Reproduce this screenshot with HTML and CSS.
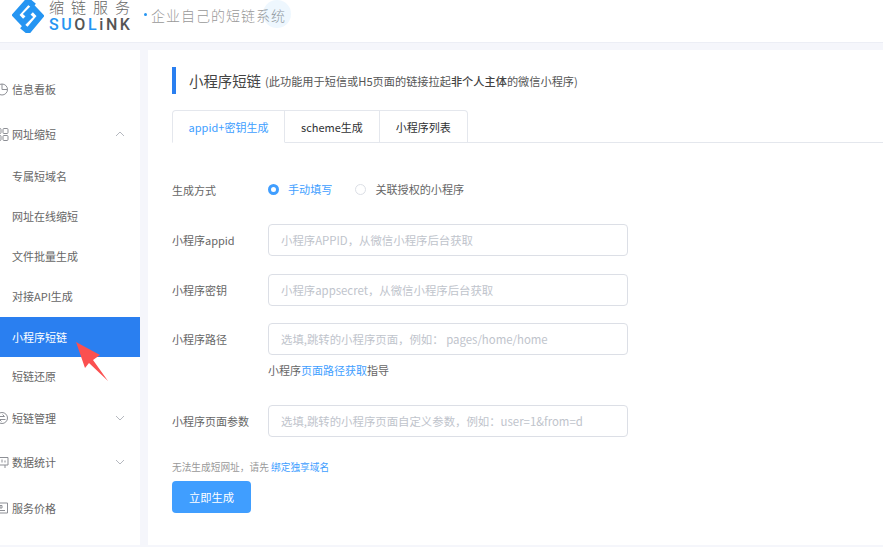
FILE: index.html
```html
<!DOCTYPE html>
<html>
  <head>
    <title>小程序短链</title>
    <link rel="stylesheet" href="styles.css">
  </head>
  <body>
    <header class="topbar">
      <svg class="logo-mark" viewBox="0 0 32 34" xmlns="http://www.w3.org/2000/svg">
        <path d="M22 7 L16 2 L3.500 16 L11 24 L19 16" />
        <path d="M10 27 L16 32 L28.500 17 L21 9 L13 17" />
      </svg>
      <div class="logo-text">
        <div class="logo-cn">缩链服务</div>
        <div class="logo-en"><span class="blue">SU</span>O<span class="blue">L</span>iNK</div>
      </div>
      <span class="slogan-dot"></span>
      <div class="slogan">企业自己的短链系统<span class="slogan-glow"></span></div>
    </header>

    <div class="page">
      <nav class="sidebar">
        <a class="menu-top first">
          <svg class="menu-icon" viewBox="0 0 14 14" xmlns="http://www.w3.org/2000/svg">
            <circle cx="7" cy="7.500" r="5.500" />
            <path d="M7 2v5.500h5.500" />
          </svg>
          信息看板
        </a>
        <a class="menu-top">
          <svg class="menu-icon" viewBox="0 0 14 14" xmlns="http://www.w3.org/2000/svg">
            <rect x="1" y="1.500" width="5" height="5" rx="1" />
            <rect x="8" y="1.500" width="5" height="5" rx="1" />
            <rect x="1" y="8.500" width="5" height="5" rx="1" />
            <rect x="8" y="8.500" width="5" height="5" rx="1" />
          </svg>
          网址缩短
          <svg class="caret" viewBox="0 0 10 6" xmlns="http://www.w3.org/2000/svg"><path d="M1 5l4-4 4 4" /></svg>
        </a>
        <a class="menu-sub">专属短域名</a>
        <a class="menu-sub">网址在线缩短</a>
        <a class="menu-sub">文件批量生成</a>
        <a class="menu-sub">对接API生成</a>
        <a class="menu-sub active">小程序短链</a>
        <a class="menu-sub">短链还原</a>
        <a class="menu-top">
          <svg class="menu-icon" viewBox="0 0 14 14" xmlns="http://www.w3.org/2000/svg">
            <circle cx="7" cy="7" r="5.500" />
            <path d="M3.500 5.500h6l-2-2M10.500 8.500h-6l2 2" />
          </svg>
          短链管理
          <svg class="caret" viewBox="0 0 10 6" xmlns="http://www.w3.org/2000/svg"><path d="M1 1l4 4 4-4" /></svg>
        </a>
        <a class="menu-top">
          <svg class="menu-icon" viewBox="0 0 14 14" xmlns="http://www.w3.org/2000/svg">
            <path d="M1 2.500h12v7.500H1zM4 10v3M10 10v3M4 7.500v-2M7 7.500v-3M10 7.500v-2" />
          </svg>
          数据统计
          <svg class="caret" viewBox="0 0 10 6" xmlns="http://www.w3.org/2000/svg"><path d="M1 1l4 4 4-4" /></svg>
        </a>
        <a class="menu-top last">
          <svg class="menu-icon" viewBox="0 0 14 14" xmlns="http://www.w3.org/2000/svg">
            <path d="M1.500 2h11v10h-11zM4 9.500h6M5 4.500h2v2.500H5z" />
          </svg>
          服务价格
        </a>
        <svg class="arrow" viewBox="0 0 34 40" xmlns="http://www.w3.org/2000/svg">
          <path d="M0 0 L24 13 L17 18 L32 39 L13 21 L9 26 Z" />
        </svg>
      </nav>

      <main class="content">
        <div class="title-row">
          <h2>小程序短链</h2>
          <span class="title-note">(此功能用于短信或H5页面的链接拉起<b>非个人主体</b>的微信小程序)</span>
        </div>

        <div class="tabs">
          <div class="tab current">appid+密钥生成</div>
          <div class="tab">scheme生成</div>
          <div class="tab">小程序列表</div>
        </div>

        <form class="form">
          <div class="form-row radio-row">
            <label class="form-label">生成方式</label>
            <span class="radio checked"></span>
            <span class="radio-text checked-text">手动填写</span>
            <span class="radio"></span>
            <span class="radio-text">关联授权的小程序</span>
          </div>
          <div class="form-row">
            <label class="form-label">小程序appid</label>
            <input class="text-input" placeholder="小程序APPID，从微信小程序后台获取">
          </div>
          <div class="form-row secret-row">
            <label class="form-label">小程序密钥</label>
            <input class="text-input" placeholder="小程序appsecret，从微信小程序后台获取">
          </div>
          <div class="form-row path-row">
            <label class="form-label">小程序路径</label>
            <input class="text-input" placeholder="选填,跳转的小程序页面，例如： pages/home/home">
          </div>
          <div class="path-help">小程序<a>页面路径获取</a>指导</div>
          <div class="form-row">
            <label class="form-label">小程序页面参数</label>
            <input class="text-input" placeholder="选填,跳转的小程序页面自定义参数，例如：user=1&from=d">
          </div>
          <div class="domain-note">无法生成短网址，请先 <a>绑定独享域名</a></div>
          <button class="submit" type="button">立即生成</button>
        </form>
      </main>
    </div>
  </body>
</html>
```

FILE: styles.css
```css
* {
  box-sizing: border-box;
}
html,
body {
  height: 100%;
}
body {
  margin: 0;
  overflow: hidden;
  background-color: #f5f6fb;
  color: #666;
  font-family: "Noto Sans CJK SC", "Noto Sans", sans-serif;
  font-size: 11px;
}
a {
  text-decoration: none;
}

/* top bar */
.topbar {
  height: 43px;
  background-color: #fff;
  border-bottom: 1px solid #eceef5;
  display: flex;
  align-items: flex-start;
  padding-left: 12px;
  overflow: hidden;
}
.logo-mark {
  width: 32px;
  height: 34px;
  margin-top: -1px;
  flex-shrink: 0;
}
.logo-mark path {
  fill: none;
  stroke: #2595f2;
  stroke-width: 6;
}
.logo-text {
  margin-left: 5px;
  width: 86px;
}
.logo-cn {
  width: 84px;
  height: 14px;
  display: flex;
  justify-content: space-between;
  font-size: 15px;
  line-height: 14px;
  letter-spacing: 7px;
  font-weight: 300;
  color: #666;
  white-space: nowrap;
}
.logo-en {
  margin-top: 3px;
  font-family: Roboto, sans-serif;
  font-size: 16px;
  line-height: 16px;
  font-weight: 500;
  letter-spacing: 2.600px;
  color: #555;
}
.blue {
  color: #2595f2;
}
.slogan-dot {
  width: 3px;
  height: 3px;
  border-radius: 50%;
  background-color: #2595f2;
  margin: 13px 0 0 9px;
}
.slogan {
  position: relative;
  margin: 5px 0 0 4px;
  font-size: 14px;
  line-height: 20px;
  font-weight: 300;
  letter-spacing: 1px;
  color: #999;
  white-space: nowrap;
}
.slogan-glow {
  position: absolute;
  right: -5px;
  top: -5px;
  width: 28px;
  height: 28px;
  border-radius: 50%;
  background-color: rgba(37, 149, 242, 0.08);
}

/* layout */
.page {
  display: flex;
  gap: 8px;
  height: 495px;
  margin-top: 7px;
}
.sidebar {
  position: relative;
  width: 140px;
  flex-shrink: 0;
  background-color: #fff;
  padding-top: 17px;
}
.content {
  flex: 1;
  background-color: #fff;
  padding: 17px 0 0 24px;
}

/* side menu */
.menu-top,
.menu-sub {
  display: flex;
  align-items: center;
  color: #666;
  white-space: nowrap;
}
.menu-top {
  height: 44px;
  padding-right: 15px;
}
.menu-top.first {
  margin-bottom: 1px;
}
.menu-top.last {
  margin-top: 2px;
}
.menu-sub {
  height: 40px;
  padding-left: 12px;
}
.menu-sub.active {
  margin-top: 1px;
  margin-bottom: -1px;
  background-color: #2a7ff0;
  color: #fff;
}
.menu-icon {
  width: 14px;
  height: 14px;
  margin: 0 3px 0 -5px;
  flex-shrink: 0;
}
.menu-icon * {
  fill: none;
  stroke: #8d8f95;
  stroke-width: 1;
}
.caret {
  width: 10px;
  height: 6px;
  margin-left: auto;
}
.caret path {
  fill: none;
  stroke: #b5b8bf;
  stroke-width: 1;
}
.arrow {
  position: absolute;
  left: 76px;
  top: 292px;
  width: 34px;
  height: 40px;
}
.arrow path {
  fill: #fb5050;
}

/* title */
.title-row {
  height: 27px;
  border-left: 4px solid #2a7ff0;
  padding-left: 13px;
  display: flex;
  align-items: center;
  gap: 4px;
}
h2 {
  margin: 0;
  font-size: 14.400px;
  font-weight: 400;
  color: #444;
}
.title-note {
  font-size: 11.200px;
  color: #555;
}
.title-note b {
  font-weight: 500;
  color: #444;
}

/* tabs */
.tabs {
  display: flex;
  margin-top: 16px;
  height: 33px;
  border-bottom: 1px solid #e4e7ed;
}
.tab {
  height: 33px;
  padding: 0 16px;
  border: 1px solid #e4e7ed;
  border-left: none;
  display: flex;
  align-items: center;
  color: #303133;
}
.tab:last-child {
  border-top-right-radius: 4px;
}
.tab.current {
  width: 113px;
  justify-content: center;
  padding: 0;
  border-left: 1px solid #e4e7ed;
  border-bottom-color: #fff;
  border-top-left-radius: 4px;
  color: #409eff;
}

/* form */
.form {
  padding-top: 30px;
}
.form-row {
  display: flex;
  align-items: center;
  margin-bottom: 18px;
}
.form-label {
  width: 96px;
  flex-shrink: 0;
}
.radio-row {
  height: 34px;
  margin-bottom: 17px;
}
.secret-row {
  margin-bottom: 17px;
}
.radio {
  width: 11px;
  height: 11px;
  border: 1px solid #dcdfe6;
  border-radius: 50%;
  margin-top: -2px;
}
.radio.checked {
  border: 3.500px solid #409eff;
  background-color: #fff;
}
.radio-text {
  margin: -3px 23px 0 9px;
  font-size: 11.100px;
}
.checked-text {
  color: #409eff;
}
.text-input {
  width: 360px;
  height: 32px;
  padding: 0 12px;
  border: 1px solid #dcdfe6;
  border-radius: 4px;
  font-family: "Noto Sans CJK SC", "Noto Sans", sans-serif;
  font-size: 11.400px;
  outline: none;
}
.text-input::placeholder {
  color: #c0c4cc;
}
.path-row {
  margin-bottom: 6px;
}
.path-help {
  margin: 0 0 26px 96px;
  height: 18px;
  line-height: 18px;
}
.path-help a,
.domain-note a {
  color: #409eff;
}
.domain-note {
  margin-top: 21px;
  height: 18px;
  line-height: 18px;
  font-size: 9.700px;
  color: #999;
}
.submit {
  display: block;
  width: 79px;
  height: 32px;
  margin-top: 5px;
  border: none;
  border-radius: 4px;
  background-color: #409eff;
  color: #fff;
  font-family: "Noto Sans CJK SC", "Noto Sans", sans-serif;
  font-size: 11.300px;
}
```
